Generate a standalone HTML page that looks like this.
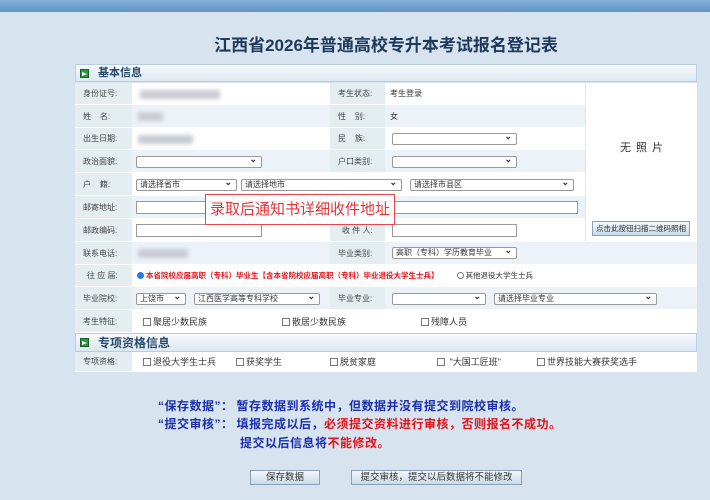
<!DOCTYPE html><html><head><meta charset="utf-8"><style>
*{margin:0;padding:0;box-sizing:border-box}
body{width:710px;height:500px;background:#d7e3ee;font-family:"Liberation Sans","Noto Sans CJK SC",sans-serif;font-size:8px;color:#333;position:relative;overflow:hidden}
.a{position:absolute}
.top{left:0;top:0;width:710px;height:12px;background:linear-gradient(#86b1d8,#5f93c4)}
.title{left:0;width:710px;top:31px;text-align:center;font-size:17px;font-weight:bold;color:#1d3a5c;padding-left:62px}
.hd{height:18px;background:linear-gradient(#f6f9fc,#dce8f2);border:1px solid #b7cde0;font-size:11px;font-weight:bold;color:#2a4a6a;line-height:17px;padding-left:22px}
.ic{position:absolute;left:4px;top:4px;width:9px;height:9px;background:#2f9a3a;border:1px solid #17602a}
.ic:after{content:"";position:absolute;left:1px;top:2px;border-left:5px solid #fff;border-top:2.5px solid transparent;border-bottom:2.5px solid transparent}
.lb{background:#e4eef1;color:#444;padding-left:8px;display:flex;align-items:center;border-bottom:1px solid #fff}
.v{display:flex;align-items:center;padding-left:5px;border-bottom:1px solid #fff}
.w{background:#fff}.b{background:#edf2f9}
.sel{position:absolute;height:12px;border:1px solid #999;background:#fff;font-size:8px;line-height:10px;padding-left:3px;color:#333;border-radius:2px}
.sel:after{content:"⌄";position:absolute;right:4px;top:-3px;font-size:9px;font-weight:bold}
.inp{position:absolute;height:13px;border:1px solid #999;background:#fff}
.blur{position:absolute;height:9px;background:#c8ccd3;filter:blur(2px)}
.cb{display:inline-block;width:8px;height:8px;border:1px solid #777;background:#fff;margin-right:2px;vertical-align:-1px}
.btn{position:absolute;height:15px;border:1px solid #8aa0b8;background:linear-gradient(#f4f8fc,#c9daea);font-size:9px;text-align:center;line-height:13px;color:#333;white-space:nowrap}
.nt{font-size:12px;letter-spacing:0.5px;font-weight:bold;color:#1a2fb0;position:absolute;white-space:nowrap}
.r{color:#e5131a}
</style></head><body>
<div class="a top"></div>
<div class="a title">江西省2026年普通高校专升本考试报名登记表</div>
<div class="a hd" style="left:75px;top:64px;width:622px"><span class="ic"></span>基本信息</div>
<div class="a" style="left:75px;top:83px;width:622px;height:250px;background:#fff"></div>

<div class="a lb" style="left:75px;top:83px;width:57px;height:22px">身份证号:</div>
<div class="a v w" style="left:132px;top:83px;width:198px;height:22px"></div>
<div class="a lb" style="left:330px;top:83px;width:55px;height:22px">考生状态:</div>
<div class="a v w" style="left:385px;top:83px;width:200px;height:22px">考生登录</div>

<div class="a lb" style="left:75px;top:105px;width:57px;height:23px">姓&nbsp;&nbsp;&nbsp;&nbsp;名:</div>
<div class="a v b" style="left:132px;top:105px;width:198px;height:23px"></div>
<div class="a lb" style="left:330px;top:105px;width:55px;height:23px">性&nbsp;&nbsp;&nbsp;&nbsp;别:</div>
<div class="a v b" style="left:385px;top:105px;width:200px;height:23px">女</div>

<div class="a lb" style="left:75px;top:128px;width:57px;height:22px">出生日期:</div>
<div class="a v w" style="left:132px;top:128px;width:198px;height:22px"></div>
<div class="a lb" style="left:330px;top:128px;width:55px;height:22px">民&nbsp;&nbsp;&nbsp;&nbsp;族:</div>
<div class="a v w" style="left:385px;top:128px;width:200px;height:22px"></div>

<div class="a lb" style="left:75px;top:150px;width:57px;height:23px">政治面貌:</div>
<div class="a v b" style="left:132px;top:150px;width:198px;height:23px"></div>
<div class="a lb" style="left:330px;top:150px;width:55px;height:23px">户口类别:</div>
<div class="a v b" style="left:385px;top:150px;width:200px;height:23px"></div>

<div class="a lb" style="left:75px;top:173px;width:57px;height:23px">户&nbsp;&nbsp;&nbsp;&nbsp;籍:</div>
<div class="a v w" style="left:132px;top:173px;width:453px;height:23px"></div>

<div class="a lb" style="left:75px;top:196px;width:57px;height:23px">邮寄地址:</div>
<div class="a v b" style="left:132px;top:196px;width:453px;height:23px"></div>

<div class="a lb" style="left:75px;top:219px;width:57px;height:23px">邮政编码:</div>
<div class="a v w" style="left:132px;top:219px;width:198px;height:23px"></div>
<div class="a lb" style="left:330px;top:219px;width:55px;height:23px;padding-left:12px">收 件 人:</div>
<div class="a v w" style="left:385px;top:219px;width:200px;height:23px"></div>

<div class="a v w" style="left:585px;top:83px;width:112px;height:159px;border-left:1px solid #dfe7ee;justify-content:center;font-size:11px;letter-spacing:5px;padding-bottom:30px">无照片</div>
<div class="btn" style="left:592px;top:221px;width:98px;font-size:7.5px">点击此按钮扫描二维码照相</div>

<div class="a lb" style="left:75px;top:242px;width:57px;height:23px">联系电话:</div>
<div class="a v b" style="left:132px;top:242px;width:198px;height:23px"></div>
<div class="a lb" style="left:330px;top:242px;width:55px;height:23px">毕业类别:</div>
<div class="a v b" style="left:385px;top:242px;width:312px;height:23px"></div>

<div class="a lb" style="left:75px;top:265px;width:57px;height:22px;padding-left:12px">往 应 届:</div>
<div class="a v w" style="left:132px;top:265px;width:565px;height:22px;font-size:7.5px;white-space:nowrap"><span style="display:inline-block;width:7px;height:7px;border-radius:50%;background:#2a7be0;margin-right:2px"></span><b class="r">本省院校应届高职（专科）毕业生【含本省院校应届高职（专科）毕业退役大学生士兵】</b><span style="margin-left:18px;display:inline-block;width:7px;height:7px;border-radius:50%;border:1px solid #777;margin-right:2px"></span>其他退役大学生士兵</div>

<div class="a lb" style="left:75px;top:287px;width:57px;height:23px">毕业院校:</div>
<div class="a v b" style="left:132px;top:287px;width:198px;height:23px"></div>
<div class="a lb" style="left:330px;top:287px;width:55px;height:23px">毕业专业:</div>
<div class="a v b" style="left:385px;top:287px;width:312px;height:23px"></div>

<div class="a lb" style="left:75px;top:310px;width:57px;height:23px">考生特征:</div>
<div class="a v w" style="left:132px;top:310px;width:555px;height:23px;font-size:9px"><span style="position:absolute;left:11px"><i class="cb"></i>聚居少数民族</span><span style="position:absolute;left:150px"><i class="cb"></i>散居少数民族</span><span style="position:absolute;left:289px"><i class="cb"></i>残障人员</span></div>

<div class="a hd" style="left:75px;top:333px;width:622px;height:19px;font-size:12px;line-height:18px"><span class="ic"></span>专项资格信息</div>
<div class="a" style="left:75px;top:352px;width:622px;height:20px;background:#fff"></div>
<div class="a lb" style="left:75px;top:352px;width:57px;height:20px">专项资格:</div>
<div class="a v w" style="left:132px;top:352px;width:555px;height:20px;font-size:9px;white-space:nowrap"><span style="position:absolute;left:11px"><i class="cb"></i>退役大学生士兵</span><span style="position:absolute;left:104px"><i class="cb"></i>获奖学生</span><span style="position:absolute;left:198px"><i class="cb"></i>脱贫家庭</span><span style="position:absolute;left:305px"><i class="cb"></i> "大国工匠班"</span><span style="position:absolute;left:405px"><i class="cb"></i>世界技能大赛获奖选手</span></div>

<div class="blur" style="left:140px;top:90px;width:80px"></div>
<div class="blur" style="left:138px;top:112px;width:25px"></div>
<div class="blur" style="left:138px;top:135px;width:55px"></div>
<div class="blur" style="left:138px;top:249px;width:50px"></div>

<div class="sel" style="left:392px;top:133px;width:125px"></div>
<div class="sel" style="left:136px;top:156px;width:126px"></div>
<div class="sel" style="left:392px;top:156px;width:125px"></div>
<div class="sel" style="left:136px;top:179px;width:101px">请选择省市</div>
<div class="sel" style="left:241px;top:179px;width:161px">请选择地市</div>
<div class="sel" style="left:410px;top:179px;width:164px">请选择市县区</div>
<div class="inp" style="left:136px;top:201px;width:442px"></div>
<div class="inp" style="left:136px;top:224px;width:126px"></div>
<div class="inp" style="left:392px;top:224px;width:125px"></div>
<div class="sel" style="left:392px;top:247px;width:125px">高职（专科）学历教育毕业</div>
<div class="sel" style="left:136px;top:293px;width:50px">上饶市</div>
<div class="sel" style="left:194px;top:293px;width:126px">江西医学高等专科学校</div>
<div class="sel" style="left:392px;top:293px;width:94px"></div>
<div class="sel" style="left:494px;top:293px;width:163px">请选择毕业专业</div>

<div class="a" style="left:205px;top:194px;width:190px;height:31px;border:1px solid #e8464c;background:rgba(255,255,255,.85);color:#e5353b;font-size:15px;line-height:29px;padding-left:4px;white-space:nowrap;overflow:hidden">录取后通知书详细收件地址</div>

<div class="nt" style="left:158px;top:397px">“保存数据”：<span style="margin-left:3px">暂存数据到系统中，但数据并没有提交到院校审核。</span></div>
<div class="nt" style="left:158px;top:415px">“提交审核”：<span style="margin-left:3px">填报完成以后，<span class="r">必须提交资料进行审核，否则报名不成功。</span></span></div>
<div class="nt" style="left:240px;top:434px">提交以后信息将<span class="r">不能修改。</span></div>

<div class="btn" style="left:250px;top:470px;width:70px;font-size:9.5px">保存数据</div>
<div class="btn" style="left:351px;top:470px;width:171px;font-size:9.5px">提交审核，提交以后数据将不能修改</div>
</body></html>
